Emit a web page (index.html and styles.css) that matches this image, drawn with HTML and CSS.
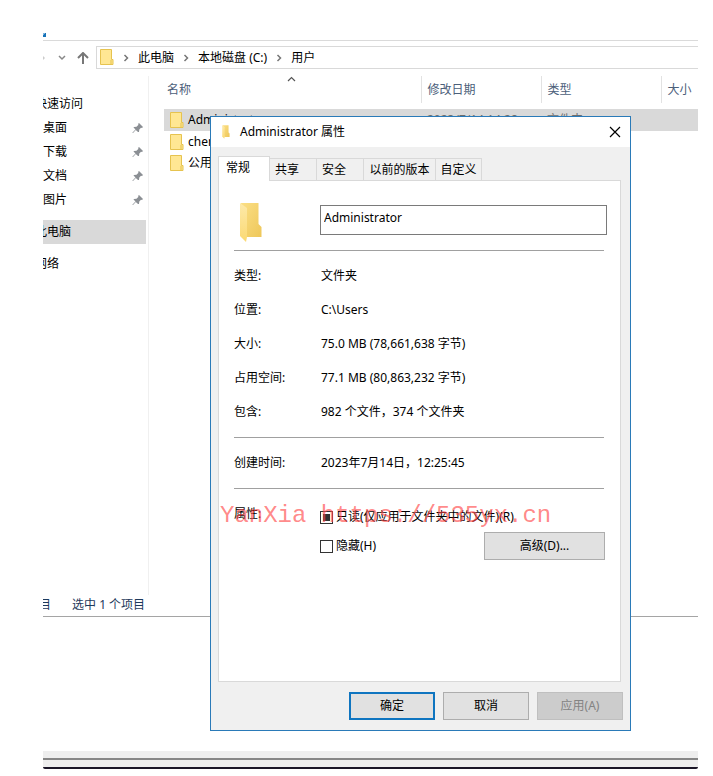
FILE: index.html
```html
<!DOCTYPE html>
<html lang="zh-CN">
<head>
<meta charset="utf-8">
<title>Administrator 属性</title>
<link rel="stylesheet" href="styles.css">
</head>
<body>
<svg class="defs" aria-hidden="true">
  <defs>
    <linearGradient id="gold" x1="0" y1="0" x2="1" y2="1">
      <stop offset="0" stop-color="#fbdf85"/><stop offset="1" stop-color="#eec75a"/>
    </linearGradient>
    <linearGradient id="flap" x1="0" y1="0" x2="0" y2="1">
      <stop offset="0" stop-color="#fde9a9"/><stop offset="1" stop-color="#fbd973"/>
    </linearGradient>
    <symbol id="folder" viewBox="0 0 14 16">
      <path d="M.5.5h11v10h1.500v5H.5z" fill="#ffe793" stroke="#e6c34f"/>
      <path d="M11 11v4" stroke="#e6c34f" fill="none"/>
    </symbol>
    <symbol id="folder-open" viewBox="0 0 22 41">
      <path d="M1 1h17.500v21l3 3v10H6z" fill="url(#gold)"/>
      <path d="M0 1l7 5v29l-1 5-6-6z" fill="url(#flap)"/>
    </symbol>
    <symbol id="pin" viewBox="0 0 12 12">
      <path d="M7 1l4 4-1 1-1-.3L7.300 7.500 7 10 6 10 3.800 8 1 11 .5 11 .5 10.500 3.500 7.500 1.500 5.500 2 5 4.500 4.700 6.500 2.800 6 2z" fill="#8b8f94"/>
    </symbol>
    <symbol id="chev" viewBox="0 0 6 8">
      <path d="M1.500 1l3 3-3 3" fill="none" stroke="#777" stroke-width="1.500"/>
    </symbol>
  </defs>
</svg>
<div class="screen">
  <main class="explorer">
    <div class="ribbon"><span class="ribbon-mark"></span></div>
    <div class="toolbar">
      <svg class="arrow-forward" viewBox="0 0 2 4"><path d="M0 0l2 2-2 2z" fill="#ccc"/></svg>
      <svg class="arrow-recent" viewBox="0 0 8 6"><path d="M1 1l3 3 3-3" fill="none" stroke="#888" stroke-width="1.500"/></svg>
      <svg class="arrow-up" viewBox="0 0 12 12"><path d="M6 12V1M1 6l5-5 5 5" fill="none" stroke="#777" stroke-width="2"/></svg>
      <nav class="address" aria-label="地址">
        <svg class="folder"><use href="#folder"/></svg>
        <svg class="chev"><use href="#chev"/></svg>
        <a href="#pc">此电脑</a>
        <svg class="chev"><use href="#chev"/></svg>
        <a href="#c">本地磁盘 (C:)</a>
        <svg class="chev"><use href="#chev"/></svg>
        <a href="#users">用户</a>
      </nav>
    </div>
    <div class="panes">
      <nav class="tree" aria-label="导航">
        <a class="tree-item" href="#quick">快速访问</a>
        <a class="tree-item sub" href="#desktop">桌面<svg class="pin"><use href="#pin"/></svg></a>
        <a class="tree-item sub" href="#downloads">下载<svg class="pin"><use href="#pin"/></svg></a>
        <a class="tree-item sub" href="#docs">文档<svg class="pin"><use href="#pin"/></svg></a>
        <a class="tree-item sub" href="#pics">图片<svg class="pin"><use href="#pin"/></svg></a>
        <a class="tree-item group current" href="#pc">此电脑</a>
        <a class="tree-item group" href="#net">网络</a>
      </nav>
      <div class="files">
        <svg class="sort" viewBox="0 0 9 6"><path d="M1 5l3.500-3.500L8 5" fill="none" stroke="#555" stroke-width="1.200"/></svg>
        <table>
          <colgroup><col class="col-name"><col class="col-date"><col class="col-type"><col></colgroup>
          <thead><tr><th>名称</th><th>修改日期</th><th>类型</th><th>大小</th></tr></thead>
          <tbody>
            <tr class="selected"><td><span class="file"><svg class="folder"><use href="#folder"/></svg>Administrator</span></td><td>2023/7/14 14:28</td><td>文件夹</td><td></td></tr>
            <tr><td><span class="file"><svg class="folder"><use href="#folder"/></svg>chen</span></td><td></td><td></td><td></td></tr>
            <tr><td><span class="file"><svg class="folder"><use href="#folder"/></svg>公用</span></td><td></td><td></td><td></td></tr>
          </tbody>
        </table>
      </div>
    </div>
    <footer class="status"><span class="count">目</span><span class="picked">选中 1 个项目</span></footer>
  </main>
  <div class="frame"><div class="frame-line"></div></div>

  <section class="dialog" role="dialog" aria-labelledby="dlg-title">
    <header class="caption">
      <svg class="caption-icon"><use href="#folder-open"/></svg>
      <h1 id="dlg-title">Administrator 属性</h1>
      <button class="close" type="button" aria-label="关闭"><svg viewBox="0 0 12 12"><path d="M1 1l10 10M11 1L1 11" stroke="#000" stroke-width="1.200"/></svg></button>
    </header>
    <form class="body">
      <div class="tabs" role="tablist">
        <button type="button" role="tab" class="tab active" aria-selected="true">常规</button>
        <button type="button" role="tab" class="tab tab-s">共享</button>
        <button type="button" role="tab" class="tab tab-s">安全</button>
        <button type="button" role="tab" class="tab tab-l">以前的版本</button>
        <button type="button" role="tab" class="tab tab-m">自定义</button>
      </div>
      <div class="panel" role="tabpanel">
        <div class="name-row">
          <svg class="big-folder"><use href="#folder-open"/></svg>
          <input class="name" type="text" value="Administrator" aria-label="名称">
        </div>
        <dl class="props">
          <dt>类型:</dt><dd>文件夹</dd>
          <dt>位置:</dt><dd>C:\Users</dd>
          <dt>大小:</dt><dd>75.0 MB (78,661,638 字节)</dd>
          <dt>占用空间:</dt><dd>77.1 MB (80,863,232 字节)</dd>
          <dt>包含:</dt><dd>982 个文件，374 个文件夹</dd>
        </dl>
        <dl class="props">
          <dt>创建时间:</dt><dd>2023年7月14日，12:25:45</dd>
        </dl>
        <div class="attrs">
          <span class="attrs-label">属性:</span>
          <div class="attrs-list">
            <label class="check"><input type="checkbox" checked>只读(仅应用于文件夹中的文件)(R)</label>
            <div class="attrs-line">
              <label class="check"><input type="checkbox">隐藏(H)</label>
              <button class="btn advanced" type="button">高级(D)...</button>
            </div>
          </div>
        </div>
      </div>
      <div class="actions">
        <button class="btn primary" type="button">确定</button>
        <button class="btn" type="button">取消</button>
        <button class="btn" type="button" disabled>应用(A)</button>
      </div>
    </form>
    <div class="watermark">YanXia https://535yx.cn</div>
  </section>
</div>
</body>
</html>
```
FILE: styles.css
```css
* { box-sizing: border-box; }
body {
  margin: 0;
  background: #fff;
  color: #000;
  font: 12px/20px "Noto Sans", "Noto Sans CJK SC", sans-serif;
}
button, input { font: inherit; color: inherit; margin: 0; }
a { color: inherit; text-decoration: none; }
svg { display: block; flex: none; }
.defs { position: absolute; width: 0; height: 0; }
.screen {
  position: relative;
  margin: 0 15px 0 43px;
  overflow: hidden;
}

/* Explorer window */
.ribbon {
  height: 41px;
  padding-top: 33px;
  border-bottom: 1px solid #dadada;
}
.ribbon-mark {
  display: block;
  width: 3px;
  height: 4px;
  background: linear-gradient(135deg, #7fb5de 30%, #1672b8 30%);
}
.toolbar {
  display: flex;
  align-items: center;
  padding-top: 5px;
}
.arrow-forward { width: 2px; height: 4px; }
.arrow-recent { width: 8px; height: 6px; margin-left: 13px; }
.arrow-up { width: 12px; height: 12px; margin: 0 7px 0 11px; }
.address {
  flex: 1;
  display: flex;
  align-items: center;
  gap: 9px;
  height: 23px;
  padding-left: 3px;
  border: 1px solid #d9d9d9;
  border-right: 0;
  white-space: nowrap;
}
.address .folder { margin-bottom: 2px; }
.folder { width: 14px; height: 16px; }
.chev { width: 6px; height: 8px; }
.panes {
  display: flex;
  min-height: 526px;
  padding-top: 7px;
}
.tree {
  width: 106px;
  padding: 16px 2px 0 0;
  border-right: 1px solid #f0f0f0;
}
.tree-item {
  display: flex;
  align-items: center;
  justify-content: space-between;
  height: 24px;
  margin-left: -8px;
}
.sub { margin-left: 0; }
.group { margin-top: 8px; }
.current { background: #d9d9d9; }
.pin { width: 12px; height: 12px; margin-right: 2px; }
.files {
  position: relative;
  flex: 1;
  min-width: 0;
  padding-left: 15px;
}
.sort {
  position: absolute;
  left: 138px;
  top: 0;
  width: 9px;
  height: 6px;
}
table {
  width: 100%;
  table-layout: fixed;
  border-collapse: collapse;
}
.col-name { width: 257px; }
.col-date, .col-type { width: 120px; }
th {
  height: 27px;
  padding: 0 0 0 6px;
  border-right: 1px solid #e2e2e2;
  color: #4c607a;
  font-weight: 400;
  text-align: left;
  white-space: nowrap;
}
th:first-child { padding-left: 3px; }
th:last-child { border-right: 0; }
tbody::before { content: ""; display: block; height: 6px; }
td { height: 21px; padding: 0 0 0 6px; color: #6d6d6d; white-space: nowrap; }
td:first-child { color: #000; }
.selected { background: #d9d9d9; }
.selected td { height: 22px; }
.file { display: flex; align-items: center; gap: 4px; }
.status {
  display: flex;
  gap: 21px;
  height: 22px;
  border-bottom: 1px solid #a5a5a5;
  color: #1e395b;
}
.count { margin-left: -4px; }
.frame {
  margin-top: 134px;
  padding: 7px 0;
  background: #eee;
  border-bottom: 2px solid #1b1628;
  border-radius: 0 0 2px 2px;
}
.frame-line { height: 2px; background: #868686; }

/* Properties dialog */
.dialog {
  position: absolute;
  top: 116px;
  left: 167px;
  right: 67px;
  border: 1px solid #2a7ab8;
  background: #f0f0f0;
}
.caption {
  display: flex;
  align-items: center;
  height: 30px;
  padding: 0 9px;
  background: #fff;
}
.caption-icon { width: 12px; height: 14px; }
.caption h1 {
  flex: 1;
  margin: 0 0 0 8px;
  font-size: 12px;
  font-weight: 400;
}
.close { padding: 0; border: 0; background: none; }
.close svg { width: 12px; height: 12px; }
.body { padding: 9px 7px 10px; }
.tabs { display: flex; align-items: flex-end; height: 24px; }
.tab {
  height: 22px;
  padding: 0;
  border: 1px solid #d9d9d9;
  border-left: 0;
  border-bottom: 0;
  background: #f0f0f0;
  white-space: nowrap;
}
.active {
  width: 52px;
  height: 25px;
  margin-bottom: -1px;
  padding: 0 12px 2px 0;
  border-left: 1px solid #d9d9d9;
  background: #fff;
  z-index: 1;
}
.tab-s { width: 47px; padding-right: 12px; }
.tab-l { width: 72px; }
.tab-m { width: 46px; }
.panel {
  min-height: 502px;
  margin-right: 2px;
  padding: 21px 13px 0 15px;
  border: 1px solid #d9d9d9;
  background: #fff;
}
.name-row {
  display: flex;
  align-items: flex-start;
  height: 48px;
  padding-top: 3px;
}
.big-folder { width: 22px; height: 41px; margin: -3px 58px 0 6px; }
.name {
  flex: 1;
  min-width: 0;
  height: 30px;
  padding: 0 3px 6px;
  border: 1px solid #7a7a7a;
  border-radius: 0;
  background: #fff;
  outline: 0;
}
.props {
  display: grid;
  grid-template-columns: 87px 1fr;
  row-gap: 14px;
  margin: 0 3px 0 0;
  padding: 15px 0;
  border-top: 1px solid #a0a0a0;
}
dd { margin: 0; white-space: nowrap; }
.attrs {
  display: flex;
  margin-right: 3px;
  padding-top: 15px;
  border-top: 1px solid #a0a0a0;
}
.attrs-label { width: 86px; flex: none; }
.attrs-list { flex: 1; padding-top: 3px; }
.attrs-line { display: flex; align-items: center; justify-content: space-between; margin-top: 5px; }
.check { display: flex; align-items: center; gap: 3px; white-space: nowrap; }
.check input {
  appearance: none;
  width: 13px;
  height: 13px;
  padding: 2px;
  border: 1px solid #333;
  background: #fff;
}
.check input:checked { background: #333 content-box; }
.btn {
  width: 86px;
  height: 28px;
  padding: 0;
  border: 1px solid #adadad;
  background: #e1e1e1;
}
.advanced { width: 121px; margin-right: -1px; }
.primary { border: 2px solid #0f75c0; }
.btn:disabled { background: #ccc; border-color: #bfbfbf; color: #838383; }
.actions {
  display: flex;
  justify-content: flex-end;
  gap: 8px;
  padding-top: 10px;
}
.watermark {
  position: absolute;
  left: 9px;
  top: 384px;
  color: rgba(255, 70, 70, 0.65);
  font: 24px/30px "Liberation Mono", monospace;
  white-space: nowrap;
  pointer-events: none;
}
```
